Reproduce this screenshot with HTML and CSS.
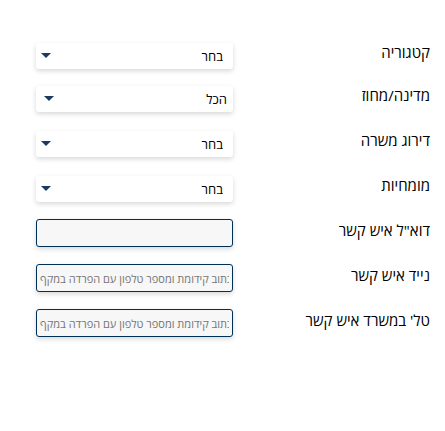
FILE: index.html
```
<!DOCTYPE html>
<html lang="he" dir="rtl">
<head>
  <meta charset="UTF-8" />
  <meta name="viewport" content="width=device-width, initial-scale=1" />
  <title>פרטי משרה</title>
  <link rel="stylesheet" href="styles.css">
</head>
<body>

  <form class="job-form">
    <div class="row row-first">
      <label for="category">קטגוריה</label>
      <div class="select-box">
        <select id="category"><option>בחר</option></select>
        <svg class="arrow" viewBox="0 0 10 5"><path d="M0 0h10L5 5z" /></svg>
      </div>
    </div>
    <div class="row">
      <label for="state">מדינה/מחוז</label>
      <div class="select-box select-all">
        <select id="state"><option>הכל</option></select>
        <svg class="arrow" viewBox="0 0 10 5"><path d="M0 0h10L5 5z" /></svg>
      </div>
    </div>
    <div class="row">
      <label for="rank">דירוג משרה</label>
      <div class="select-box">
        <select id="rank"><option>בחר</option></select>
        <svg class="arrow" viewBox="0 0 10 5"><path d="M0 0h10L5 5z" /></svg>
      </div>
    </div>
    <div class="row">
      <label for="skills">מומחיות</label>
      <div class="select-box">
        <select id="skills"><option>בחר</option></select>
        <svg class="arrow" viewBox="0 0 10 5"><path d="M0 0h10L5 5z" /></svg>
      </div>
    </div>
    <div class="row">
      <label for="email">דוא"ל איש קשר</label>
      <input type="email" id="email" dir="ltr" />
    </div>
    <div class="row">
      <label for="mobile">נייד איש קשר</label>
      <input type="tel" id="mobile" dir="ltr" placeholder="כתוב קידומת ומספר טלפון עם הפרדה במקף" />
    </div>
    <div class="row">
      <label for="office">טל' במשרד איש קשר</label>
      <input type="tel" id="office" dir="ltr" placeholder="כתוב קידומת ומספר טלפון עם הפרדה במקף" />
    </div>
  </form>

</body>
</html>
```
FILE: styles.css
```
body {
  margin: 0;
  background: #fff;
  color: #000;
  font-family: "Open Sans", "Noto Sans", sans-serif;
  font-size: 15px;
}

.job-form { padding: 41px 15px 40px 36px; }

.row {
  display: grid;
  grid-template-columns: 1fr 1fr;
  align-items: start;
  min-height: 45px;
}
.row-first { min-height: 43px; }

label { line-height: 22px; white-space: nowrap; }

.select-box { position: relative; margin-top: 2px; }

select, input {
  display: block;
  width: 100%;
  box-sizing: border-box;
  border-radius: 3px;
  box-shadow: 0 2px 5px rgba(0, 0, 0, 0.16);
  font-family: inherit;
}

select {
  appearance: none;
  height: 26px;
  padding: 0 10px;
  border: 0;
  background: #fff;
  color: #000;
  font-size: 13px;
}
.select-all select { padding: 0 6px; }

.arrow {
  position: absolute;
  left: 5px;
  top: 10px;
  width: 10px;
  height: 5px;
  fill: #1b3a62;
  pointer-events: none;
}
.select-all .arrow { left: 8px; }

input {
  height: 28px;
  padding: 0 3px;
  border: 1px solid #003058;
  background: #f7f7f7;
  font-size: 11px;
}
input::placeholder { color: #757575; }
```
